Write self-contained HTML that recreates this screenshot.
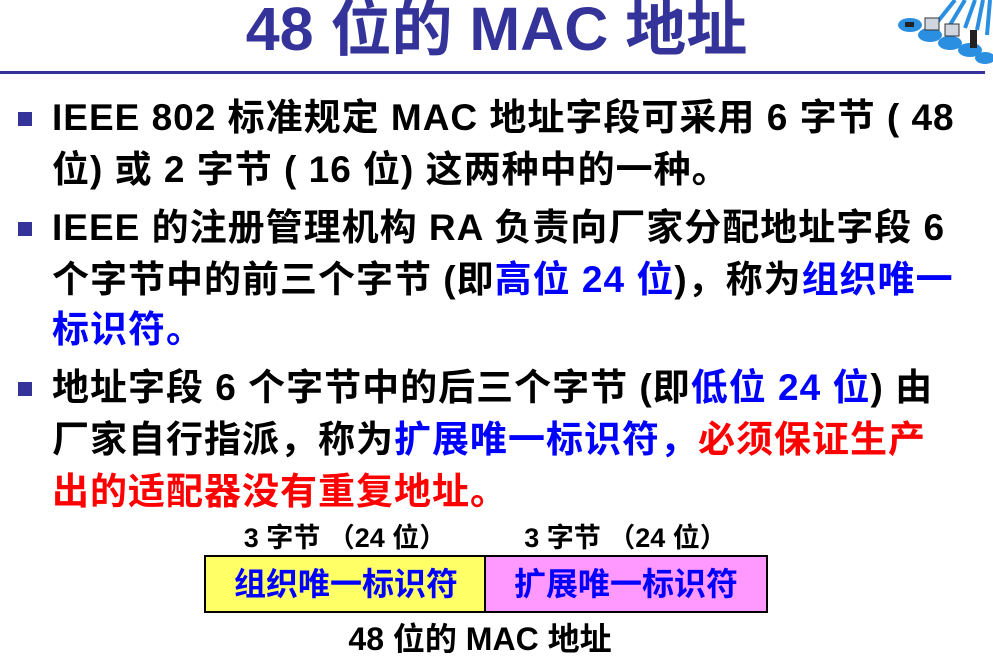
<!DOCTYPE html>
<html><head><meta charset="utf-8"><style>
body{margin:0;width:993px;height:658px;background:#fff;position:relative;overflow:hidden;font-family:"Liberation Sans","Noto Sans CJK SC",sans-serif;font-weight:bold}
.t{position:absolute;white-space:nowrap}
.l{position:absolute;left:52px;font-size:37px;line-height:40px;letter-spacing:1px;color:#000;white-space:nowrap}
.b{position:absolute;left:18px;width:14px;height:14px;background:#333399}
.bl{color:#0000ff}.rd{color:#ff0000}
</style></head><body>
<div class="t" style="left:0;width:993px;text-align:center;top:-3px;font-size:61px;line-height:64px;color:#333399">48 位的 MAC 地址</div>
<div style="position:absolute;left:0;top:71px;width:985px;height:3px;background:#333399"></div>
<svg style="position:absolute;left:895px;top:0" width="98" height="64">
<g fill="none" stroke="#2a8fe0" stroke-width="4"><path d="M60 0 L40 25 M70 0 L55 25 M80 0 L70 28 M88 0 L82 30 M95 0 L92 35"/></g>
<ellipse cx="15" cy="25" rx="12" ry="7" fill="#2a8fe0"/><ellipse cx="35" cy="35" rx="12" ry="7" fill="#2a8fe0"/><ellipse cx="55" cy="43" rx="12" ry="7" fill="#2a8fe0"/><ellipse cx="75" cy="50" rx="12" ry="7" fill="#2a8fe0"/><ellipse cx="90" cy="58" rx="10" ry="6" fill="#2a8fe0"/>
<rect x="30" y="18" width="14" height="12" fill="#cfd6e0" stroke="#333"/><rect x="50" y="24" width="14" height="12" fill="#cfd6e0" stroke="#333"/><rect x="75" y="30" width="7" height="18" fill="#222"/><rect x="10" y="22" width="9" height="5" fill="#222"/>
</svg>
<div class="b" style="top:112px"></div>
<div class="l" style="top:98px">IEEE 802 标准规定 MAC 地址字段可采用 6 字节 ( 48</div>
<div class="l" style="top:150px">位) 或 2 字节 ( 16 位) 这两种中的一种。</div>
<div class="b" style="top:222px"></div>
<div class="l" style="top:208px">IEEE 的注册管理机构 RA 负责向厂家分配地址字段 6</div>
<div class="l" style="top:260px">个字节中的前三个字节 (即<span class="bl">高位 24 位</span>)，称为<span class="bl">组织唯一</span></div>
<div class="l" style="top:310px"><span class="bl">标识符。</span></div>
<div class="b" style="top:382px"></div>
<div class="l" style="top:368px">地址字段 6 个字节中的后三个字节 (即<span class="bl">低位 24 位</span>) 由</div>
<div class="l" style="top:420px">厂家自行指派，称为<span class="bl">扩展唯一标识符，</span><span class="rd">必须保证生产</span></div>
<div class="l rd" style="top:472px">出的适配器没有重复地址。</div>
<div class="t" style="left:205px;width:280px;text-align:center;top:522px;font-size:27px;line-height:32px">3 字节 （24 位）</div>
<div class="t" style="left:485px;width:281px;text-align:center;top:522px;font-size:27px;line-height:32px">3 字节 （24 位）</div>
<div style="position:absolute;left:204px;top:555px;width:280px;height:54px;background:#ffff66;border:2px solid #000;font-size:32px;line-height:54px;text-align:center;color:#0000ff">组织唯一标识符</div>
<div style="position:absolute;left:484px;top:555px;width:280px;height:54px;background:#ff99ff;border:2px solid #000;font-size:32px;line-height:54px;text-align:center;color:#0000ff">扩展唯一标识符</div>
<div class="t" style="left:200px;width:560px;text-align:center;top:620px;font-size:32px;line-height:38px">48 位的 MAC 地址</div>
</body></html>
